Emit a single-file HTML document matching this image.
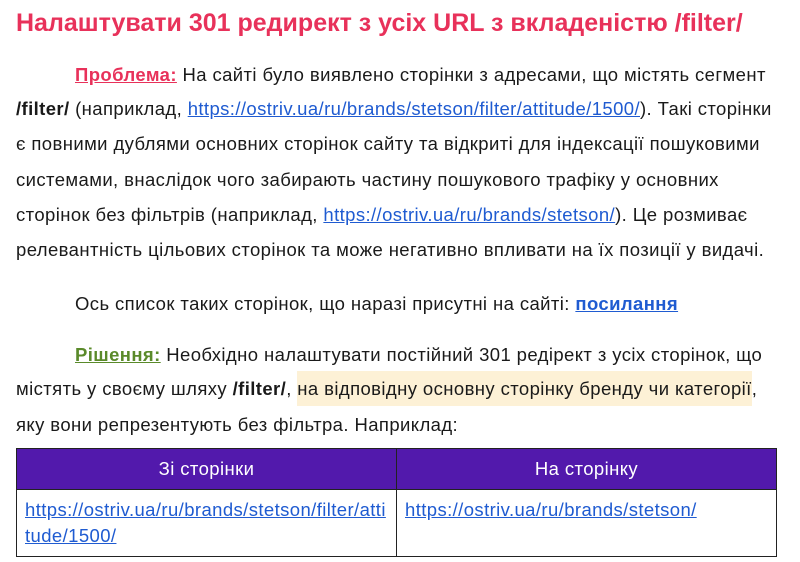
<!DOCTYPE html>
<html><head><meta charset="utf-8"><style>
body{margin:0;width:800px;height:562px;background:#fff;font-family:"Liberation Sans",sans-serif;color:#1a1a1a;position:relative;overflow:hidden}
.l{position:absolute;left:16px;font-size:18.5px;letter-spacing:0.4px;white-space:nowrap;line-height:20px}
h1{position:absolute;left:16px;top:9px;margin:0;font-size:25px;color:#e8315a;font-weight:bold;white-space:nowrap}
a{color:#1f5bd1;text-decoration:underline}
.r{color:#e8315a;font-weight:bold;text-decoration:underline}
.g{color:#5a8a2a;font-weight:bold;text-decoration:underline}
.hl{background:#fdf1d6;padding:7px 0}
table{position:absolute;left:16px;top:448px;width:761px;border-collapse:collapse;font-size:18.5px;letter-spacing:0.4px}
td,th{border:1.5px solid #222;vertical-align:top}
th{background:#5219ac;color:#fff;font-weight:normal;height:40px;text-align:center;vertical-align:middle;padding:0}
td{height:48px;padding:7px 8px;line-height:26px}
</style></head><body>
<h1>Налаштувати 301 редирект з усіх URL з вкладеністю /filter/</h1>
<div class="l" style="top:65px;left:75px"><span class="r">Проблема:</span> На сайті було виявлено сторінки з адресами, що містять сегмент</div>
<div class="l" style="top:99px"><b>/filter/</b> (наприклад, <a>https://ostriv.ua/ru/brands/stetson/filter/attitude/1500/</a>). Такі сторінки</div>
<div class="l" style="top:134px">є повними дублями основних сторінок сайту та відкриті для індексації пошуковими</div>
<div class="l" style="top:170px">системами, внаслідок чого забирають частину пошукового трафіку у основних</div>
<div class="l" style="top:205px">сторінок без фільтрів (наприклад, <a>https://ostriv.ua/ru/brands/stetson/</a>). Це розмиває</div>
<div class="l" style="top:240px">релевантність цільових сторінок та може негативно впливати на їх позиції у видачі.</div>
<div class="l" style="top:294px;left:75px">Ось список таких сторінок, що наразі присутні на сайті: <a style="font-weight:bold">посилання</a></div>
<div class="l" style="top:345px;left:75px"><span class="g">Рішення:</span> Необхідно налаштувати постійний 301 редірект з усіх сторінок, що</div>
<div class="l" style="top:379px">містять у своєму шляху <b>/filter/</b>, <span class="hl">на відповідну основну сторінку бренду чи категорії</span>,</div>
<div class="l" style="top:415px">яку вони репрезентують без фільтра. Наприклад:</div>
<table><tr><th style="width:50%">Зі сторінки</th><th>На сторінку</th></tr>
<tr><td><a>https://ostriv.ua/ru/brands/stetson/filter/atti<br>tude/1500/</a></td><td><a>https://ostriv.ua/ru/brands/stetson/</a></td></tr></table>
</body></html>
